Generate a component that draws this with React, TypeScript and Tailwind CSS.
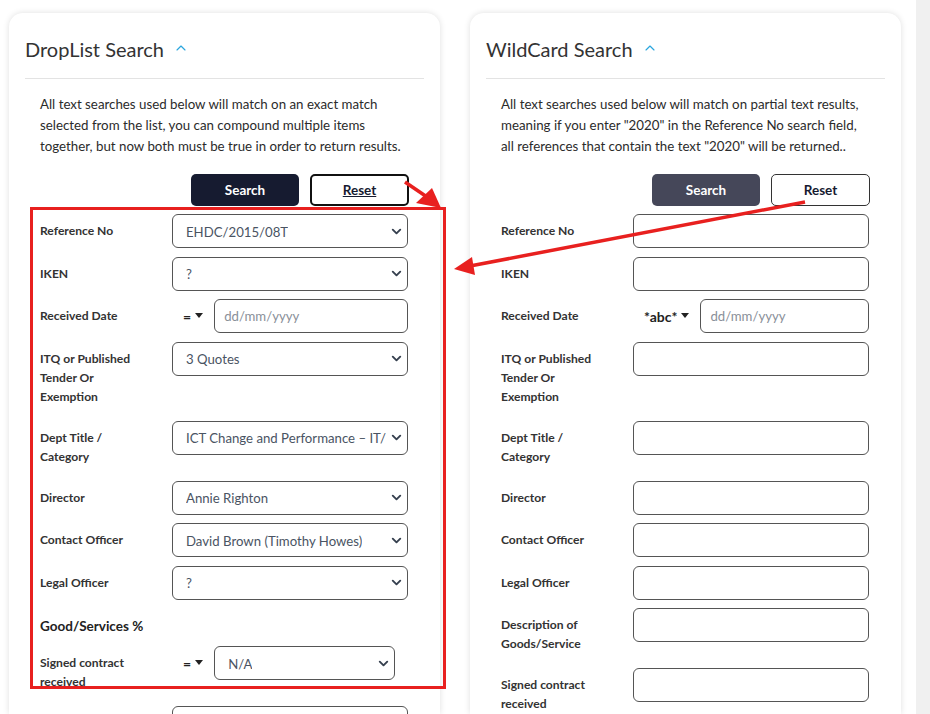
import { ChevronDown, ChevronUp } from "lucide-react";

type Row = {
  label: string[];
  kind: "select" | "input" | "date";
  value?: string;
  op?: string;
};

const dropRows: Row[] = [
  { label: ["Reference No"], kind: "select", value: "EHDC/2015/08T" },
  { label: ["IKEN"], kind: "select", value: "?" },
  { label: ["Received Date"], kind: "date", op: "=" },
  { label: ["ITQ or Published", "Tender Or", "Exemption"], kind: "select", value: "3 Quotes" },
  { label: ["Dept Title /", "Category"], kind: "select", value: "ICT Change and Performance – IT/" },
  { label: ["Director"], kind: "select", value: "Annie Righton" },
  { label: ["Contact Officer"], kind: "select", value: "David Brown (Timothy Howes)" },
  { label: ["Legal Officer"], kind: "select", value: "?" },
];

const wildRows: Row[] = [
  { label: ["Reference No"], kind: "input" },
  { label: ["IKEN"], kind: "input" },
  { label: ["Received Date"], kind: "date", op: "*abc*" },
  { label: ["ITQ or Published", "Tender Or", "Exemption"], kind: "input" },
  { label: ["Dept Title /", "Category"], kind: "input" },
  { label: ["Director"], kind: "input" },
  { label: ["Contact Officer"], kind: "input" },
  { label: ["Legal Officer"], kind: "input" },
  { label: ["Description of", "Goods/Service"], kind: "input" },
  { label: ["Signed contract", "received"], kind: "input" },
];

function Caret() {
  return <span className="inline-block w-0 h-0 border-l-[4px] border-r-[4px] border-t-[5px] border-l-transparent border-r-transparent border-t-[#222] ml-[4px] mb-[2px]" />;
}

function Operator({ op }: { op: string }) {
  return (
    <div className="flex items-center px-[11px] h-[34px] text-[14px] font-bold text-[#222] shrink-0 whitespace-nowrap">
      {op}
      <Caret />
    </div>
  );
}

function SelectBox({ value, className = "" }: { value: string; className?: string }) {
  return (
    <div className={`h-[34px] border border-[#555] rounded-[6px] flex items-center justify-between pl-[13px] pr-[3px] text-[13.2px] text-[#4a5463] bg-white ${className}`}>
      <span className="overflow-hidden whitespace-nowrap pt-[3px]">{value}</span>
      <ChevronDown size={15} strokeWidth={3} className="text-[#36404f] shrink-0 ml-[2px]" />
    </div>
  );
}

function InputBox({ placeholder, className = "" }: { placeholder?: string; className?: string }) {
  return (
    <div className={`h-[34px] border border-[#555] rounded-[6px] flex items-center px-[9px] pt-[1px] text-[13.2px] text-[#8a9099] bg-white whitespace-nowrap overflow-hidden ${className}`}>
      {placeholder}
    </div>
  );
}

function Label({ lines }: { lines: string[] }) {
  return (
    <div className="w-[132px] shrink-0 pt-[7px] pb-[6.5px] text-[12.1px] leading-[19px] font-bold text-[#333] whitespace-nowrap">
      {lines.map((l) => (
        <div key={l}>{l}</div>
      ))}
    </div>
  );
}

function FormRow({ row }: { row: Row }) {
  return (
    <div className="flex mb-[8.5px]">
      <Label lines={row.label} />
      <div className="w-[236px] flex">
        {row.kind === "select" && <SelectBox value={row.value!} className="w-full" />}
        {row.kind === "input" && <InputBox className="w-full" />}
        {row.kind === "date" && (
          <>
            <Operator op={row.op!} />
            <InputBox placeholder="dd/mm/yyyy" className="flex-1" />
          </>
        )}
      </div>
    </div>
  );
}

function Card({ title, text, dark, focused, children }: { title: string; text: string[]; dark: boolean; focused: boolean; children: React.ReactNode }) {
  return (
    <div className="w-[431px] shrink-0 bg-white rounded-t-[14px] shadow-[0_0_6px_rgba(0,0,0,0.13)] px-4 pt-[23px]">
      <div className="flex items-center h-[26px] text-[20px] text-[#333]">
        {title}
        <ChevronUp size={16} strokeWidth={1.75} className="text-[#2ba6de] ml-[9px] mb-[2px]" />
      </div>
      <div className="h-px bg-[#e3e3e3] mt-[16px]" />
      <div className="px-[15px]">
        <div className="mt-[15px] text-[13.3px] leading-[21px] text-[#2b2b2b] whitespace-nowrap">
          {text.map((t) => (
            <div key={t}>{t}</div>
          ))}
        </div>
        <div className="flex justify-end gap-[11px] mt-[17px] mb-[8px]">
          <button className={`w-[108px] h-[32px] rounded-[5px] text-white text-[13.5px] font-bold ${dark ? "bg-[#161b30]" : "bg-[#454759]"}`}>Search</button>
          <button className={`w-[99px] h-[32px] rounded-[5px] bg-white text-[13.5px] font-bold text-[#161b30] ${focused ? "border-2 border-[#111] underline" : "border border-[#333]"}`}>Reset</button>
        </div>
        {children}
      </div>
    </div>
  );
}

export default function App() {
  return (
    <div className="relative flex w-[930px] h-[714px] overflow-hidden bg-white font-['Lato',sans-serif]">
      <div className="flex-1 flex gap-[30px] pl-[9px] pt-[13px]">
        <Card
          title="DropList Search"
          dark
          focused
          text={[
            "All text searches used below will match on an exact match",
            "selected from the list, you can compound multiple items",
            "together, but now both must be true in order to return results.",
          ]}
        >
          {dropRows.map((r) => (
            <FormRow key={r.label.join()} row={r} />
          ))}
          <div className="pt-[8px] pb-[10px] text-[13.5px] leading-[20px] font-bold text-[#222]">Good/Services %</div>
          <div className="flex mb-[8.5px]">
            <Label lines={["Signed contract", "received"]} />
            <div className="flex">
              <Operator op="=" />
              <SelectBox value="N/A" className="w-[181px]" />
            </div>
          </div>
          <div className="flex">
            <div className="w-[132px] shrink-0" />
            <InputBox className="w-[236px]" />
          </div>
        </Card>
        <Card
          title="WildCard Search"
          dark={false}
          focused={false}
          text={[
            "All text searches used below will match on partial text results,",
            'meaning if you enter "2020" in the Reference No search field,',
            'all references that contain the text "2020" will be returned..',
          ]}
        >
          {wildRows.map((r) => (
            <FormRow key={r.label.join()} row={r} />
          ))}
        </Card>
      </div>
      <div className="w-[14px] bg-[#f0f0f0] shrink-0" />

      <svg className="absolute inset-0 pointer-events-none" width="930" height="714" viewBox="0 0 930 714">
        <rect x="31.5" y="208.5" width="413" height="479" fill="none" stroke="#e8201f" strokeWidth="3" />
        <line x1="405" y1="182" x2="427" y2="197" stroke="#e8201f" strokeWidth="3.5" />
        <polygon points="441,208 416,203 432,188" fill="#e8201f" />
        <line x1="805" y1="202" x2="470" y2="266" stroke="#e8201f" strokeWidth="3.5" />
        <polygon points="454,269 472,257 475,275" fill="#e8201f" />
      </svg>
    </div>
  );
}
